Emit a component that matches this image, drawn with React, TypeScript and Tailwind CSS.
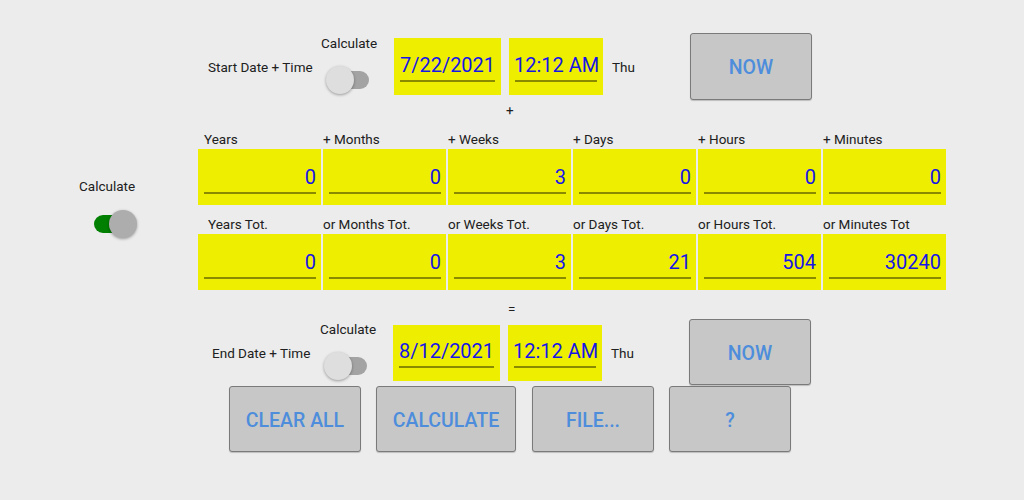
const YELLOW = 'bg-[#eeee00]'

function Switch({ on }: { on: boolean }) {
  return (
    <div className="relative w-[43px] h-[30px]">
      <div
        className={`absolute top-[6px] h-[18px] w-[34px] rounded-full ${
          on ? 'left-0 bg-[#007f00]' : 'left-[9px] bg-[#a3a3a3]'
        }`}
      />
      <div
        className={`absolute top-[1px] h-[28px] w-[28px] rounded-full shadow-[0_1px_3px_rgba(0,0,0,0.35)] ${
          on ? 'left-[15px] bg-[#adadad]' : 'left-0 bg-[#dedede]'
        }`}
      />
    </div>
  )
}

function CalcToggle({ on, offset }: { on: boolean; offset: string }) {
  return (
    <div className="flex flex-col self-start mt-[2px] w-[57px]">
      <span className="text-[13.5px] leading-4">Calculate</span>
      <div className={`mt-[14px] ${offset}`}>
        <Switch on={on} />
      </div>
    </div>
  )
}

function DateBox({ value, width, height }: { value: string; width: string; height: string }) {
  return (
    <div className={`${YELLOW} ${width} ${height} px-[5px] flex flex-col justify-center`}>
      <span className="text-[20px] leading-6 text-[#1616e6] text-center whitespace-nowrap mt-[2px]">{value}</span>
      <div className="h-[2px] mt-[3px] mx-[1px] bg-[#8a8a00]" />
    </div>
  )
}

function Cell({ value }: { value: string }) {
  return (
    <div className={`${YELLOW} w-[123px] h-[56px] pl-[6px] pr-[5px] pt-[16px]`}>
      <div className="text-[20px] leading-6 text-[#1616e6] text-right">{value}</div>
      <div className="h-[2px] mt-[3px] bg-[#8a8a00]" />
    </div>
  )
}

function Btn({ label, width, height }: { label: string; width: string; height: string }) {
  return (
    <button
      className={`${width} ${height} pt-[3px] rounded-[3px] border border-[#7a7a7a] bg-[#c6c7c6] text-[19.5px] font-medium text-[#4d8ddc] shadow-[0_1px_1px_rgba(0,0,0,0.2)]`}
    >
      {label}
    </button>
  )
}

const TOP_LABELS = ['Years', '+ Months', '+ Weeks', '+ Days', '+ Hours', '+ Minutes']
const TOT_LABELS = ['Years Tot.', 'or Months Tot.', 'or Weeks Tot.', 'or Days Tot.', 'or Hours Tot.', 'or Minutes Tot']
const ADD_VALUES = ['0', '0', '3', '0', '0', '0']
const TOT_VALUES = ['0', '0', '3', '21', '504', '30240']

export default function App() {
  return (
    <div className="w-[1024px] h-[500px] overflow-hidden bg-[#ececec] text-[#202020] font-['Roboto','Liberation_Sans',sans-serif]">
      {/* Start row */}
      <div className="flex items-center h-[67px] mt-[33px]">
        <span className="ml-[208px] w-[113px] text-[13.5px] leading-4">Start Date + Time</span>
        <CalcToggle on={false} offset="ml-[5px]" />
        <div className="ml-[16px]">
          <DateBox value="7/22/2021" width="w-[107px]" height="h-[57px]" />
        </div>
        <div className="ml-[8px]">
          <DateBox value="12:12 AM" width="w-[94px]" height="h-[57px]" />
        </div>
        <span className="ml-[9px] w-[78px] text-[13.5px] leading-4">Thu</span>
        <Btn label="NOW" width="w-[122px]" height="h-[67px]" />
      </div>

      <div className="h-[20px] leading-[20px] text-[13.5px] pl-[506px]">+</div>

      {/* Duration grid */}
      <div className="flex mt-[10px]">
        <div className="w-[198px] flex flex-col pt-[48px]">
          <span className="ml-[79px] text-[13.5px] leading-4">Calculate</span>
          <div className="ml-[94px] mt-[15px]">
            <Switch on={true} />
          </div>
        </div>
        <div className="flex flex-col">
          <div className="flex gap-[2px] h-[19px] items-center text-[13.5px]">
            {TOP_LABELS.map((l, i) => (
              <span key={l} className={`w-[123px] ${i === 0 ? 'pl-[6px]' : ''}`}>
                {l}
              </span>
            ))}
          </div>
          <div className="flex gap-[2px]">
            {ADD_VALUES.map((v, i) => (
              <Cell key={i} value={v} />
            ))}
          </div>
          <div className="flex gap-[2px] h-[29px] items-end pb-[2px] text-[13.5px] leading-4">
            {TOT_LABELS.map((l, i) => (
              <span key={l} className={`w-[123px] ${i === 0 ? 'pl-[10px]' : ''}`}>
                {l}
              </span>
            ))}
          </div>
          <div className="flex gap-[2px]">
            {TOT_VALUES.map((v, i) => (
              <Cell key={i} value={v} />
            ))}
          </div>
        </div>
      </div>

      <div className="h-[29px] leading-[38px] text-[13.5px] pl-[508px]">=</div>

      {/* End row */}
      <div className="flex items-center h-[66px]">
        <span className="ml-[212px] w-[108px] text-[13.5px] leading-4 mt-[2px]">End Date + Time</span>
        <CalcToggle on={false} offset="ml-[4px]" />
        <div className="ml-[16px] mt-[1px]">
          <DateBox value="8/12/2021" width="w-[107px]" height="h-[56px]" />
        </div>
        <div className="ml-[8px] mt-[1px]">
          <DateBox value="12:12 AM" width="w-[94px]" height="h-[56px]" />
        </div>
        <span className="ml-[9px] w-[78px] text-[13.5px] leading-4 mt-[2px]">Thu</span>
        <Btn label="NOW" width="w-[122px]" height="h-[66px]" />
      </div>

      {/* Action buttons */}
      <div className="flex mt-[1px] ml-[229px]">
        <Btn label="CLEAR ALL" width="w-[132px]" height="h-[66px]" />
        <div className="ml-[15px]">
          <Btn label="CALCULATE" width="w-[140px]" height="h-[66px]" />
        </div>
        <div className="ml-[16px]">
          <Btn label="FILE..." width="w-[122px]" height="h-[66px]" />
        </div>
        <div className="ml-[15px]">
          <Btn label="?" width="w-[122px]" height="h-[66px]" />
        </div>
      </div>
    </div>
  )
}
